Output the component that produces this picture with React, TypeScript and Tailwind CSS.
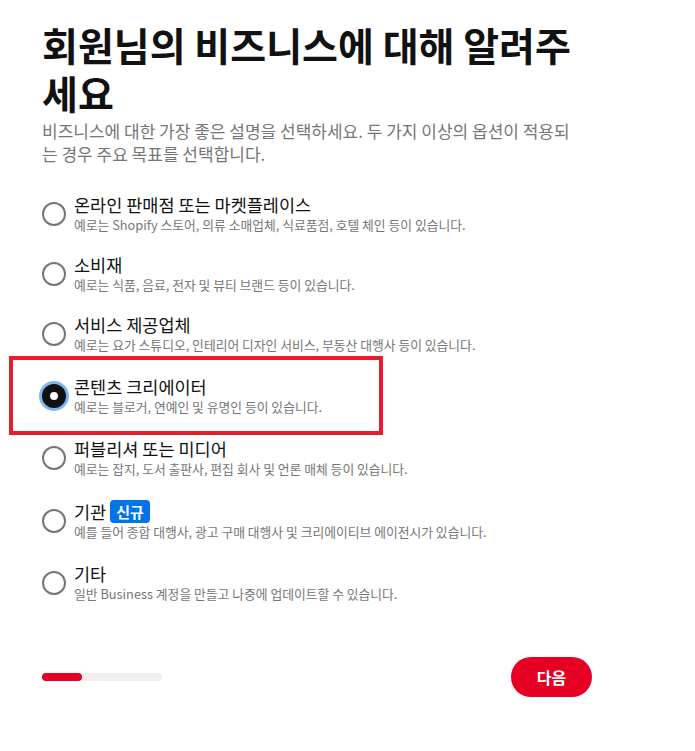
const FONT = '"Noto Sans CJK KR", "Noto Sans", sans-serif';

interface Option {
  id: string;
  title: string;
  desc: string;
  badge?: string;
}

const OPTIONS: Option[] = [
  { id: 'online', title: '온라인 판매점 또는 마켓플레이스', desc: '예로는 Shopify 스토어, 의류 소매업체, 식료품점, 호텔 체인 등이 있습니다.' },
  { id: 'consumer', title: '소비재', desc: '예로는 식품, 음료, 전자 및 뷰티 브랜드 등이 있습니다.' },
  { id: 'service', title: '서비스 제공업체', desc: '예로는 요가 스튜디오, 인테리어 디자인 서비스, 부동산 대행사 등이 있습니다.' },
  { id: 'creator', title: '콘텐츠 크리에이터', desc: '예로는 블로거, 연예인 및 유명인 등이 있습니다.' },
  { id: 'media', title: '퍼블리셔 또는 미디어', desc: '예로는 잡지, 도서 출판사, 편집 회사 및 언론 매체 등이 있습니다.' },
  { id: 'agency', title: '기관', badge: '신규', desc: '예를 들어 종합 대행사, 광고 구매 대행사 및 크리에이티브 에이전시가 있습니다.' },
  { id: 'other', title: '기타', desc: '일반 Business 계정을 만들고 나중에 업데이트할 수 있습니다.' },
];

function Radio({ checked }: { checked: boolean }) {
  if (checked) {
    return (
      <div className="w-6 h-6 shrink-0 rounded-full border-[8px] border-[#111111] bg-white ring-[3px] ring-[#7db5f3]" />
    );
  }
  return <div className="w-6 h-6 shrink-0 rounded-full border-2 border-[#767676] bg-white" />;
}

export default function App() {
  const selected = 'creator';

  return (
    <div className="min-h-screen bg-white pl-[42px] pt-5" style={{ fontFamily: FONT }}>
      <div className="w-[550px]">
        <h1 className="text-[39px] font-bold leading-[48px] text-[#111111]">
          회원님의 비즈니스에 대해 알려주세요
        </h1>
        <p className="mt-[3px] max-w-[532px] text-[17px] leading-[23px] text-[#767676]">
          비즈니스에 대한 가장 좋은 설명을 선택하세요. 두 가지 이상의 옵션이 적용되는 경우 주요 목표를 선택합니다.
        </p>

        <div className="mt-[29px] flex flex-col gap-5">
          {OPTIONS.map(opt => {
            const checked = opt.id === selected;
            return (
              <div
                key={opt.id}
                className={`relative flex items-center gap-2 ${checked ? 'py-[2px]' : ''} ${opt.badge ? 'py-[2px]' : ''}`}
              >
                {checked && (
                  <div className="pointer-events-none absolute -left-[33px] -top-[18px] h-[79px] w-[374px] border-4 border-[#e81c2b]" />
                )}
                <Radio checked={checked} />
                <div className="flex flex-col">
                  <div className="flex items-center gap-1 text-[17.5px] leading-[22px] text-[#111111]">
                    <span>{opt.title}</span>
                    {opt.badge && (
                      <span className="rounded-[4px] bg-[#0074e8] px-[6px] text-[15px] font-bold leading-[23px] text-white">
                        {opt.badge}
                      </span>
                    )}
                  </div>
                  <div className="text-[12.8px] leading-[18px] text-[#767676]">{opt.desc}</div>
                </div>
              </div>
            );
          })}
        </div>

        <div className="mt-[54px] flex items-center justify-between">
          <div className="h-2 w-[120px] rounded-full bg-[#efefef]">
            <div className="h-2 w-[40px] rounded-full bg-[#e60023]" />
          </div>
          <button className="h-10 w-[81px] rounded-full bg-[#e60023] text-[16px] font-semibold text-white">
            다음
          </button>
        </div>
      </div>
    </div>
  );
}
